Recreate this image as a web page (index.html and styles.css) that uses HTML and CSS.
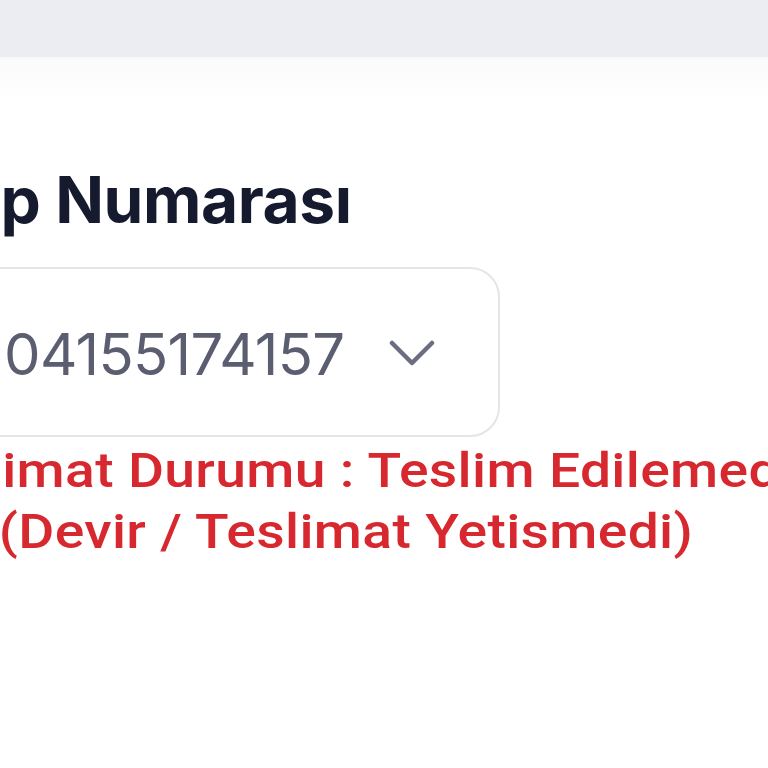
FILE: index.html
```html
<!DOCTYPE html>
<html lang="tr">
<head>
<meta charset="utf-8">
<title>Sipariş Numarası</title>
<link rel="stylesheet" href="styles.css">
</head>
<body>
<header class="topbar"></header>
<div class="fade"></div>
<main class="content">
  <h1 class="label">Sip Numarası</h1>
  <div class="select">
    <span class="value">04155174157</span>
    <svg class="chevron" width="46" height="28" viewBox="0 0 46 28" aria-hidden="true">
      <path d="M3 3 L23 23 L43 3" fill="none" stroke="#6b6d80" stroke-width="4.5" stroke-linecap="round" stroke-linejoin="round"/>
    </svg>
  </div>
  <p class="status">Teslimat Durumu : Teslim Edilemedi<br>(Devir / Teslimat Yetismedi)</p>
</main>
</body>
</html>
```
FILE: styles.css
```css
html, body {
  margin: 0;
  padding: 0;
  background: #ffffff;
  overflow: hidden;
  width: 768px;
  height: 768px;
}

.topbar {
  height: 57px;
  background: #ebedf2;
}

.fade {
  height: 42px;
  background: linear-gradient(#f7f8fd 0, #fbfbfc 4px, #ffffff 100%);
}

.content {
  margin-left: -58px;
  width: 558px;
  display: flex;
  flex-direction: column;
}

.label {
  margin: 69px 0 0 0;
  font-family: Inter, "Noto Sans", sans-serif;
  font-weight: 700;
  font-size: 64px;
  line-height: 64px;
  color: #161a2e;
  letter-spacing: -0.4px;
  white-space: nowrap;
}

.select {
  margin-top: 35px;
  height: 170px;
  box-sizing: border-box;
  border: 2px solid #e4e5eb;
  border-radius: 30px;
  display: flex;
  align-items: center;
  padding-left: 60px;
  padding-top: 4px;
}

.value {
  font-family: Inter, "Noto Sans", sans-serif;
  font-size: 58px;
  font-weight: 400;
  color: #5b5d70;
  letter-spacing: -0.7px;
}

.chevron {
  margin-left: 45px;
}

.status {
  margin: 3px 0 0 0;
  width: 808px;
  text-align: center;
  font-family: Roboto, "Liberation Sans", sans-serif;
  font-weight: 500;
  font-size: 48px;
  line-height: 61px;
  letter-spacing: 0.3px;
  color: #d7282f;
  white-space: nowrap;
  transform: scaleX(1.15);
  transform-origin: 50% 50%;
}
```
